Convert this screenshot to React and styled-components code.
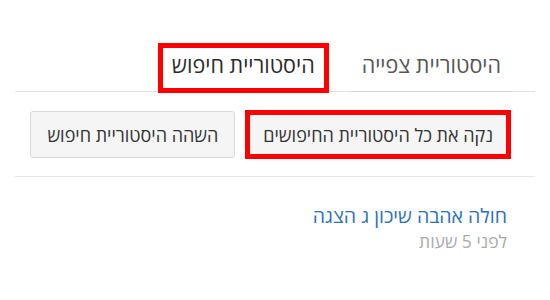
import React from "react";
import styled, { createGlobalStyle } from "styled-components";

const Global = createGlobalStyle`
  html, body { margin: 0; padding: 0; background: #fff; }
  body {
    font-family: "Open Sans", "Liberation Sans", "DejaVu Sans", sans-serif;
    direction: rtl;
  }
  * { box-sizing: border-box; }
`;

const Page = styled.div`
  width: 550px;
  padding: 0 15px;
`;

const Highlight = styled.span`
  position: absolute;
  inset: -2px;
  border: 5px solid #ff0000;
  pointer-events: none;
`;

const TabBar = styled.div`
  display: flex;
  gap: 23px;
  padding: 45px 22px 0 0;
  border-bottom: 1px solid #e0e0e0;
`;

const Tab = styled.div`
  position: relative;
  height: 47px;
  padding: 0 12px 7px;
  display: flex;
  align-items: center;
  font-size: 21.5px;
  color: ${(p) => (p.$active ? "#2b2b2b" : "#555")};
  border-bottom: 1px solid ${(p) => (p.$active ? "#fff" : "#d4d4d4")};
  margin-bottom: -1px;
  background: #fff;
  white-space: nowrap;
`;

const Toolbar = styled.div`
  display: flex;
  gap: 11px;
  padding: 19px 25px 18px 0;
  border-bottom: 1px solid #e6e6e6;
`;

const Button = styled.button`
  position: relative;
  height: 47px;
  padding: 0 16px;
  font-family: inherit;
  font-size: 18px;
  color: #333;
  background: #f5f5f5;
  border: 1px solid #d9d9d9;
  border-radius: 3px;
  white-space: nowrap;
  cursor: pointer;
`;

const Results = styled.div`
  padding: 27px 28px 0 0;
`;

const ItemTitle = styled.a`
  display: block;
  font-size: 19.5px;
  line-height: 24px;
  color: #2b72bd;
  text-decoration: none;
`;

const ItemTime = styled.div`
  font-size: 17.5px;
  line-height: 26px;
  color: #aaa;
`;

export default function App() {
  return (
    <>
      <Global />
      <Page>
        <TabBar>
          <Tab>היסטוריית צפייה</Tab>
          <Tab $active>
            היסטוריית חיפוש
            <Highlight />
          </Tab>
        </TabBar>
        <Toolbar>
          <Button>
            נקה את כל היסטוריית החיפושים
            <Highlight />
          </Button>
          <Button>השהה היסטוריית חיפוש</Button>
        </Toolbar>
        <Results>
          <ItemTitle href="#">חולה אהבה שיכון ג הצגה</ItemTitle>
          <ItemTime>לפני 5 שעות</ItemTime>
        </Results>
      </Page>
    </>
  );
}
